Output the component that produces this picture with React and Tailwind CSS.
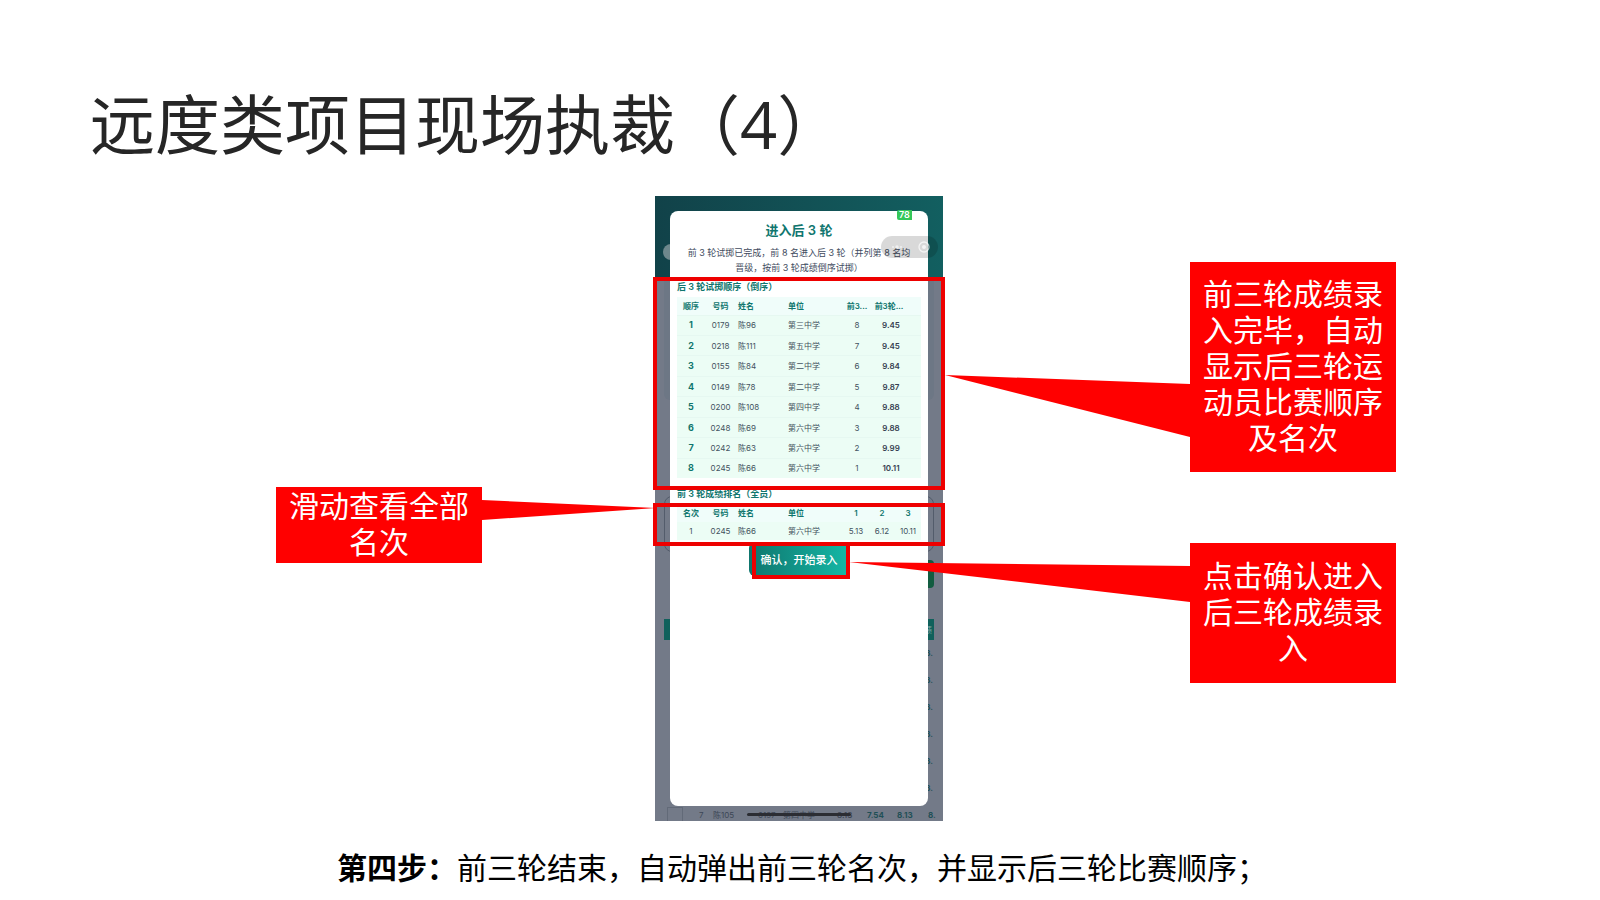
const orderRows = [
  ["1", "0179", "陈96", "第三中学", "8", "9.45"],
  ["2", "0218", "陈111", "第五中学", "7", "9.45"],
  ["3", "0155", "陈84", "第二中学", "6", "9.84"],
  ["4", "0149", "陈78", "第二中学", "5", "9.87"],
  ["5", "0200", "陈108", "第四中学", "4", "9.88"],
  ["6", "0248", "陈69", "第六中学", "3", "9.88"],
  ["7", "0242", "陈63", "第六中学", "2", "9.99"],
  ["8", "0245", "陈66", "第六中学", "1", "10.11"],
];

const rankRows = [["1", "0245", "陈66", "第六中学", "5.13", "6.12", "10.11"]];

function OrderTable() {
  return (
    <table className="h-[181px] w-full table-fixed border-collapse whitespace-nowrap bg-[#ecfdf5] text-center text-[8px] leading-3 text-[#435260]">
      <colgroup>
        <col className="w-[28px]" />
        <col className="w-[31px]" />
        <col className="w-[50px]" />
        <col className="w-[57px]" />
        <col className="w-[28px]" />
        <col />
      </colgroup>
      <thead className="bg-[#f0fdfa] text-[#0f766e]">
        <tr className="h-[18px]">
          <th className="font-semibold">顺序</th>
          <th className="font-semibold">号码</th>
          <th className="pl-0.5 text-left font-semibold">姓名</th>
          <th className="pl-0.5 text-left font-semibold">单位</th>
          <th className="font-semibold">前3...</th>
          <th className="pr-3.5 font-semibold">前3轮...</th>
        </tr>
      </thead>
      <tbody>
        {orderRows.map((r) => (
          <tr key={r[0]} className="border-t border-[#e6f8f1]">
            <td className="text-[9px] font-bold text-[#0f766e]">{r[0]}</td>
            <td>{r[1]}</td>
            <td className="pl-0.5 text-left">{r[2]}</td>
            <td className="pl-0.5 text-left">{r[3]}</td>
            <td>{r[4]}</td>
            <td className="pr-2.5 font-semibold text-[#374151]">{r[5]}</td>
          </tr>
        ))}
      </tbody>
    </table>
  );
}

function RankTable() {
  return (
    <table className="w-full table-fixed border-collapse whitespace-nowrap bg-[#ecfdf5] text-center text-[8px] leading-3 text-[#435260]">
      <colgroup>
        <col className="w-[28px]" />
        <col className="w-[31px]" />
        <col className="w-[50px]" />
        <col className="w-[57px]" />
        <col />
        <col />
        <col />
      </colgroup>
      <thead className="bg-[#f0fdfa] text-[#0f766e]">
        <tr className="h-[18px]">
          <th className="font-semibold">名次</th>
          <th className="font-semibold">号码</th>
          <th className="pl-0.5 text-left font-semibold">姓名</th>
          <th className="pl-0.5 text-left font-semibold">单位</th>
          <th className="font-semibold">1</th>
          <th className="font-semibold">2</th>
          <th className="font-semibold">3</th>
        </tr>
      </thead>
      <tbody>
        {rankRows.map((r) => (
          <tr key={r[0]} className="h-[18px]">
            <td>{r[0]}</td>
            <td>{r[1]}</td>
            <td className="pl-0.5 text-left">{r[2]}</td>
            <td className="pl-0.5 text-left">{r[3]}</td>
            <td>{r[4]}</td>
            <td>{r[5]}</td>
            <td>{r[6]}</td>
          </tr>
        ))}
      </tbody>
    </table>
  );
}

function DimmedPage() {
  return (
    <div className="flex h-full flex-col overflow-hidden bg-[#737a88] text-[8px] text-[#1f4f56] [&>*]:shrink-0">
      <div className="flex h-[84px] items-center bg-linear-to-r from-[#114249] to-[#125f60] px-2 pt-7">
        <span className="size-4 rounded-full bg-[#6d878c]" />
      </div>
      <div className="mx-[9px] h-[120px] rounded-b-md bg-[#6d7785]" />
      <div className="mx-[9px] mt-[96px] h-[56px] rounded-lg border border-[#535c6b]" />
      <div className="ml-auto mr-[9px] mt-2 h-[28px] w-1/2 rounded bg-[#125c40]" />
      <div className="mx-[9px] mt-[31px] flex h-[21px] items-center justify-end bg-[#10615c] pr-0.5 text-[#7fa5a5]">
        绩
      </div>
      <div className="flex flex-col items-end pr-2.5 font-bold">
        {[1, 2, 3, 4, 5, 6].map((n) => (
          <span key={n} className="h-[27px] leading-[27px]">
            8.
          </span>
        ))}
      </div>
      <div className="ml-3 mt-[5px] flex h-4 items-center whitespace-nowrap text-[#3d4756]">
        <span className="h-4 w-4 border border-[#626a78]" />
        <span className="w-[30px] pl-4">7</span>
        <span className="w-[45px]">陈105</span>
        <span className="w-[25px]">0197</span>
        <span className="w-[54px]">第四中学</span>
        <span className="w-[30px] font-semibold">8.13</span>
        <span className="w-[30px] font-bold text-[#1f4f56]">7.54</span>
        <span className="w-[31px] font-bold text-[#1f4f56]">8.13</span>
        <span className="font-bold text-[#1f4f56]">8.</span>
      </div>
    </div>
  );
}

function Phone() {
  return (
    <div className="relative h-[625px] font-['Inter','Noto_Sans_CJK_SC',sans-serif]">
      <DimmedPage />
      <div className="absolute inset-x-[15px] bottom-[15px] top-[15px] flex flex-col rounded-[8px] bg-white px-[7px] pt-[9px]">
        <h2 className="text-center text-[13px] font-semibold leading-5 text-[#0f766e]">进入后 3 轮</h2>
        <p className="mt-[5px] whitespace-nowrap text-center text-[9px] leading-[15px] text-[#414b5e]">
          前 3 轮试掷已完成，前 8 名进入后 3 轮（并列第 8 名均
          <br />
          晋级，按前 3 轮成绩倒序试掷）
        </p>
        <h3 className="mt-1 text-[9px] font-semibold leading-4 text-[#0f766e]">后 3 轮试掷顺序（倒序）</h3>
        <div className="mt-0.5">
          <OrderTable />
        </div>
        <h3 className="mt-2 text-[9px] font-semibold leading-4 text-[#0f766e]">前 3 轮成绩排名（全员）</h3>
        <div className="mt-0.5">
          <RankTable />
        </div>
        <button
          type="button"
          className="mt-0.5 h-[34px] w-[100px] self-center rounded-md bg-linear-to-r from-[#0f766e] to-[#14b8a6] pb-1 text-[11px] font-medium text-white"
        >
          确认，开始录入
        </button>
      </div>

      <span className="absolute left-[242px] top-[14px] h-[10px] w-[15px] overflow-hidden rounded-l-xs bg-[#34c759] pl-0.5 text-[9px] font-semibold leading-[10px] text-white">
        78
      </span>
      <div className="absolute left-[226px] top-[40px] flex h-[22px] w-[57px] items-center justify-between rounded-full bg-black/15 pl-2.5 pr-2">
        <svg viewBox="0 0 12 4" className="w-3 fill-white/60">
          <circle cx="2" cy="2" r="1" />
          <circle cx="6" cy="2" r="1.7" />
          <circle cx="10" cy="2" r="1" />
        </svg>
        <svg viewBox="0 0 12 12" className="size-3 fill-none stroke-white/70">
          <circle cx="6" cy="6" r="5" strokeWidth="1.3" />
          <circle cx="6" cy="6" r="2" className="fill-white/70 stroke-none" />
        </svg>
      </div>
      <span className="absolute bottom-[5px] left-[92px] h-[3px] w-[104px] rounded-full bg-[#2b2d33]" />

      <span className="absolute -left-0.5 top-[81px] h-[213px] w-[292px] border-4 border-[#ee0000]" />
      <span className="absolute -left-0.5 top-[307px] h-[43px] w-[292px] border-4 border-[#ee0000]" />
      <span className="absolute left-[97px] top-[346px] h-[37px] w-[98px] border-4 border-[#ee0000]" />
    </div>
  );
}

export default function App() {
  return (
    <main className="flex min-h-screen flex-col bg-white pr-0.5 font-['Open_Sans','Noto_Sans_CJK_SC',sans-serif]">
      <h1 className="px-[90px] pb-0.5 pt-[78px] text-[65px] font-normal leading-[92px] text-[#262626]">
        远度类项目现场执裁（4）
      </h1>
      <section className="mt-6 grid grid-cols-[1fr_288px_1fr] text-[30px] font-normal leading-9 text-white">
        <div className="flex items-start justify-end pr-[173px]">
          <aside className="relative mt-[291px] w-[206px] bg-[#ff0000] px-2.5 pb-[3px] pt-px text-center">
            滑动查看全部名次
            <svg viewBox="0 0 174 20" className="absolute left-full top-[13px] h-5 w-[174px] fill-[#ff0000]">
              <path d="M0 0L174 8L0 20Z" />
            </svg>
          </aside>
        </div>
        <Phone />
        <div className="flex flex-col items-start gap-[71px] pl-[247px] pt-[66px]">
          <aside className="relative w-[206px] bg-[#ff0000] px-2.5 pb-4 pt-3.5 text-center">
            前三轮成绩录入完毕，自动显示后三轮运动员比赛顺序及名次
            <svg viewBox="0 0 245 62" className="absolute right-full top-[113px] h-[62px] w-[245px] fill-[#ff0000]">
              <path d="M0 0L245 9V62Z" />
            </svg>
          </aside>
          <aside className="relative w-[206px] bg-[#ff0000] px-2.5 pb-[17px] pt-[15px] text-center">
            点击确认进入后三轮成绩录入
            <svg viewBox="0 0 341 40" className="absolute right-full top-[19px] h-10 w-[341px] fill-[#ff0000]">
              <path d="M0 0L341 4V40Z" />
            </svg>
          </aside>
        </div>
      </section>
      <p className="mt-6 pl-1.5 text-center text-[30px] font-normal leading-[46px] text-black">
        <strong className="font-bold">第四步：</strong>前三轮结束，自动弹出前三轮名次，并显示后三轮比赛顺序；
      </p>
    </main>
  );
}
